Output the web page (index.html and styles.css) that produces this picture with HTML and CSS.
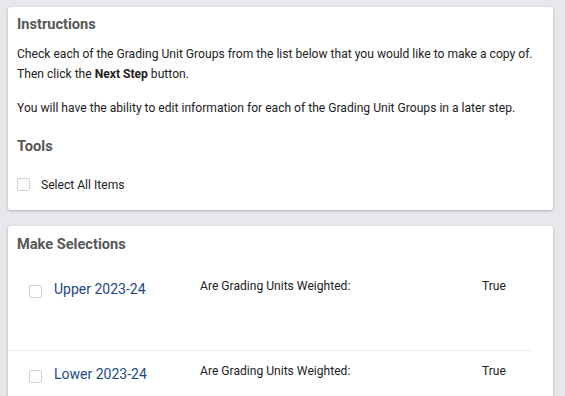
FILE: index.html
```html
<!DOCTYPE html>
<html>
<head>
<meta charset="utf-8">
<link rel="stylesheet" href="styles.css">
</head>
<body>
<div class="page">
  <section class="card card-instructions">
    <h2 class="card-title">Instructions</h2>
    <p class="text">Check each of the Grading Unit Groups from the list below that you would like to make a copy of.<br>Then click the <b>Next Step</b> button.</p>
    <p class="text text-second">You will have the ability to edit information for each of the Grading Unit Groups in a later step.</p>
    <h2 class="card-title tools-title">Tools</h2>
    <label class="check-row">
      <span class="checkbox"></span>
      <span class="check-label">Select All Items</span>
    </label>
  </section>
  <section class="card card-selections">
    <h2 class="card-title">Make Selections</h2>
    <div class="rows">
      <div class="row">
        <span class="checkbox row-check"></span>
        <a class="group-name">Upper 2023-24</a>
        <span class="field-label">Are Grading Units Weighted:</span>
        <span class="field-value">True</span>
      </div>
      <div class="row">
        <span class="checkbox row-check"></span>
        <a class="group-name">Lower 2023-24</a>
        <span class="field-label">Are Grading Units Weighted:</span>
        <span class="field-value">True</span>
      </div>
    </div>
  </section>
</div>
</body>
</html>
```
FILE: styles.css
```css
html, body {
  margin: 0;
  padding: 0;
  background: #e7e8eb;
  font-family: Roboto, "Liberation Sans", Arial, sans-serif;
  color: #222;
  overflow: hidden;
}
.page {
  padding: 7px 12px 0 8px;
  display: flex;
  flex-direction: column;
  gap: 16px;
}
.card {
  background: #fff;
  border-radius: 3px;
  box-shadow: 0 1px 3px rgba(0,0,0,0.25);
  padding: 7px 9px 19px 9px;
}
.card-title {
  margin: 0;
  font-size: 14.6px;
  font-weight: 700;
  color: #575757;
  line-height: 20px;
}
.text {
  margin: 10px 0 0 0;
  font-size: 12.1px;
  line-height: 20px;
  color: #222;
}
.text-second {
  margin-top: 14px;
}
.tools-title {
  margin-top: 18px;
}
.check-row {
  display: flex;
  align-items: center;
  gap: 11px;
  margin-top: 22px;
  height: 13px;
}
.checkbox {
  display: inline-block;
  box-sizing: border-box;
  width: 13px;
  height: 13px;
  border: 1px solid #d0d0d0;
  border-radius: 2px;
  background: #fff;
  flex: none;
}
.check-label {
  font-size: 12.1px;
  color: #222;
}
.card-selections {
  padding-top: 8px;
  padding-bottom: 40px;
}
.rows {
  margin-top: 16px;
}
.row {
  display: flex;
  align-items: flex-start;
  height: 80px;
  border-bottom: 1px solid #ececec;
  margin-right: 12px;
  margin-left: -9px;
  padding-left: 21px;
}
.row + .row {
  padding-top: 4px;
  border-bottom: none;
}
.row-check {
  margin-top: 15px;
}
.group-name {
  margin-top: 9px;
  margin-left: 12px;
  width: 146px;
  font-size: 14px;
  line-height: 20px;
  color: #1d4a86;
  text-decoration: none;
}
.field-label {
  margin-top: 7px;
  font-size: 12.1px;
  line-height: 18px;
  width: 282px;
}
.field-value {
  margin-top: 7px;
  font-size: 12.1px;
  line-height: 18px;
}
```
